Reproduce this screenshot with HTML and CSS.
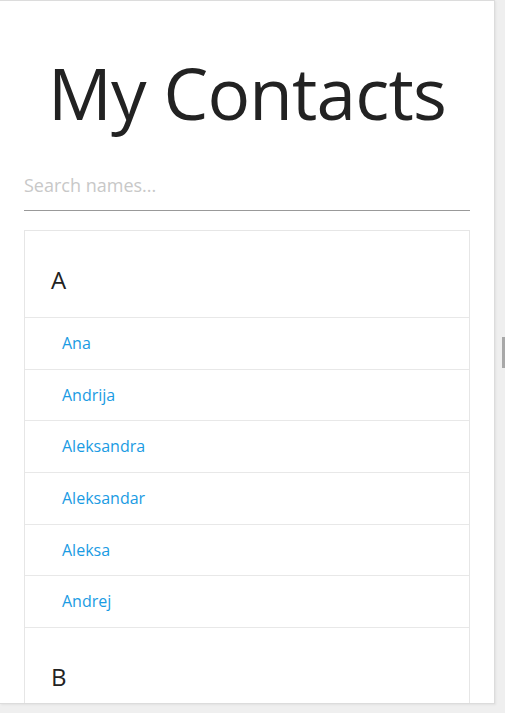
FILE: index.html
```html
<!DOCTYPE html>
<html>
<head>
<meta charset="utf-8">
<link rel="stylesheet" href="styles.css">
</head>
<body>
<div class="frame">
  <div class="page">
    <h1 class="title">My Contacts</h1>
    <div class="search">
      <input class="search-input" type="text" placeholder="Search names...">
    </div>
    <div class="list">
      <div class="group">
        <div class="group-head">A</div>
        <a class="item">Ana</a>
        <a class="item">Andrija</a>
        <a class="item">Aleksandra</a>
        <a class="item">Aleksandar</a>
        <a class="item">Aleksa</a>
        <a class="item">Andrej</a>
      </div>
      <div class="group">
        <div class="group-head">B</div>
      </div>
    </div>
  </div>
</div>
<div class="thumb"></div>
</body>
</html>
```
FILE: styles.css
```css
html, body {
  margin: 0;
  padding: 0;
  background: #efefef;
}
body {
  position: relative;
  width: 505px;
  height: 713px;
  overflow: hidden;
  font-family: "Open Sans", "Noto Sans", sans-serif;
}
.frame {
  width: 495px;
  height: 704px;
  box-sizing: border-box;
  border: 1px solid #dcdcdc;
  border-left: none;
  background: #fff;
  overflow: hidden;
  box-shadow: 1px 1px 2px rgba(0,0,0,0.06);
}
.page {
  padding: 0 24px;
}
.title {
  margin: 0;
  padding-top: 47px;
  text-align: center;
  font-weight: 400;
  font-size: 71px;
  line-height: 90px;
  color: #222;
  letter-spacing: -0.8px;
}
.search {
  margin-top: 34px;
}
.search-input {
  display: block;
  width: 100%;
  box-sizing: border-box;
  border: none;
  border-bottom: 1px solid #999;
  outline: none;
  padding: 0 0 12px 0;
  font-family: inherit;
  font-size: 18px;
  line-height: 26px;
  color: #222;
  background: transparent;
}
.search-input::placeholder {
  color: #c8c8c8;
}
.list {
  margin-top: 19px;
  border: 1px solid #e6e6e6;
}
.group-head {
  padding: 33px 26px 21px;
  font-size: 24px;
  line-height: 32px;
  color: #222;
  border-bottom: 1px solid #e8e8e8;
}
.item {
  display: block;
  padding: 13px 37px 0;
  height: 37.7px;
  font-size: 16px;
  line-height: 24px;
  color: #1a9be3;
  border-bottom: 1px solid #e8e8e8;
}
.thumb {
  position: absolute;
  left: 502px;
  top: 337px;
  width: 3px;
  height: 31px;
  background: #a8a8a8;
}
```
